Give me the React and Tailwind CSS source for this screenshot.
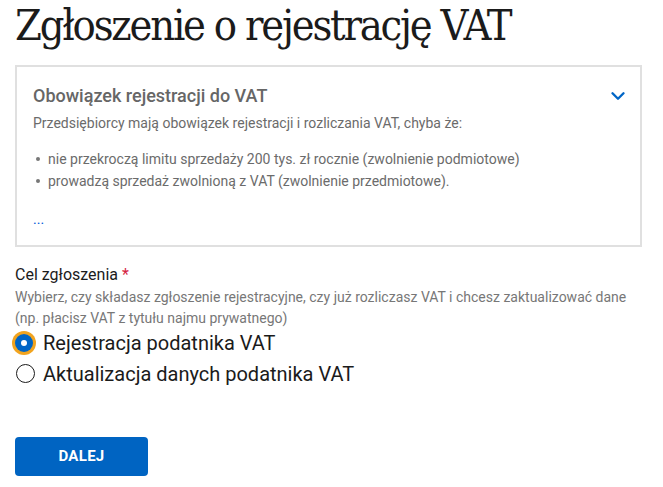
import { ChevronDown } from "lucide-react";

export default function App() {
  return (
    <div className="min-h-screen bg-white px-[15px] pt-0 font-['Roboto',sans-serif]">
      <h1 className="text-[43px] leading-[50px] text-[#1b1b1b] font-['DejaVu_Serif_Condensed','DejaVu_Serif',serif] tracking-[-2.2px]">
        Zgłoszenie o rejestrację VAT
      </h1>

      <div className="mt-[15px] w-[627px] h-[182px] border-2 border-[#e0e0e0] px-4 pt-[16px]">
        <div className="flex items-center justify-between">
          <h2 className="text-[18px] leading-[26px] font-medium text-[#666666]">
            Obowiązek rejestracji do VAT
          </h2>
          <ChevronDown className="w-[22px] h-[22px] mr-[-5px] text-[#0065c6]" strokeWidth={2.6} />
        </div>
        <p className="mt-[4px] text-[14px] leading-[20px] text-[#6b6b6b]">
          Przedsiębiorcy mają obowiązek rejestracji i rozliczania VAT, chyba że:
        </p>
        <ul className="mt-[15px] text-[14px] leading-[22px] text-[#6b6b6b]">
          <li className="flex items-center gap-[8px] pl-[3px]">
            <span className="w-[4px] h-[4px] rounded-full bg-[#777777]" />
            <span>nie przekroczą limitu sprzedaży 200 tys. zł rocznie (zwolnienie podmiotowe)</span>
          </li>
          <li className="flex items-center gap-[8px] pl-[3px]">
            <span className="w-[4px] h-[4px] rounded-full bg-[#777777]" />
            <span>prowadzą sprzedaż zwolnioną z VAT (zwolnienie przedmiotowe).</span>
          </li>
        </ul>
        <div className="mt-[17px] text-[14px] leading-[20px] text-[#0057d8]">...</div>
      </div>

      <div className="mt-[16px]">
        <div className="text-[16px] leading-[24px] text-[#1b1b1b]">
          Cel zgłoszenia <span className="text-[#d5233f]">*</span>
        </div>
        <p className="text-[14px] leading-[21px] text-[#777777]">
          Wybierz, czy składasz zgłoszenie rejestracyjne, czy już rozliczasz VAT i chcesz zaktualizować dane
          <br />
          (np. płacisz VAT z tytułu najmu prywatnego)
        </p>
        <div className="mt-[-2px] ml-[-3px] flex flex-col">
          <label className="flex items-center gap-[7px] h-[31px]">
            <span className="w-[24px] h-[24px] rounded-full bg-[#f2a41f] flex items-center justify-center">
              <span className="w-[18px] h-[18px] rounded-full bg-[#0065c6] flex items-center justify-center">
                <span className="w-[6px] h-[6px] rounded-full bg-white" />
              </span>
            </span>
            <span className="text-[20px] leading-[28px] text-[#1b1b1b]">Rejestracja podatnika VAT</span>
          </label>
          <label className="flex items-center gap-[7px] h-[31px]">
            <span className="w-[24px] h-[24px] flex items-center justify-center">
              <span className="ml-[2px] w-[19px] h-[19px] rounded-full border-[1.5px] border-[#1b1b1b]" />
            </span>
            <span className="text-[20px] leading-[28px] text-[#1b1b1b]">Aktualizacja danych podatnika VAT</span>
          </label>
        </div>
      </div>

      <button className="mt-[48px] w-[133px] h-[39px] rounded-[4px] bg-[#0064c2] text-white text-[15px] font-bold tracking-[0.3px]">
        DALEJ
      </button>
    </div>
  );
}
